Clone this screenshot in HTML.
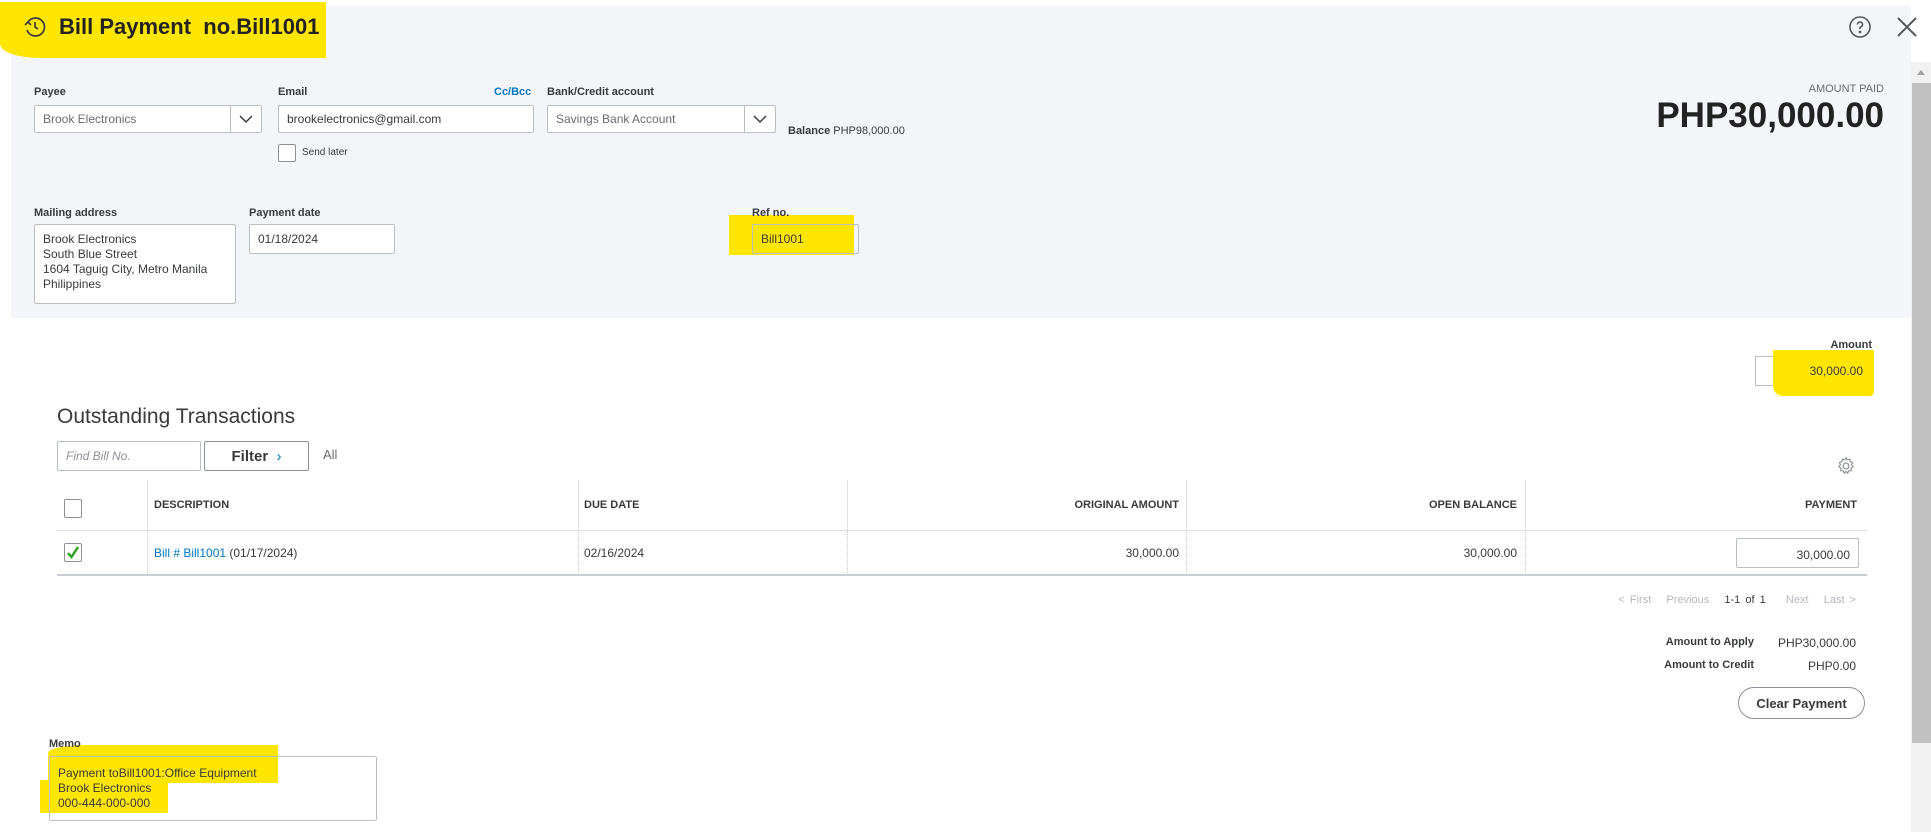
<!DOCTYPE html>
<html><head><meta charset="utf-8"><style>
*{box-sizing:border-box;margin:0;padding:0}
body{width:1931px;height:832px;position:relative;overflow:hidden;background:#fff;font-family:"Liberation Sans",sans-serif;color:#393a3d;font-size:12px}
.a{position:absolute}
.panel{left:11px;top:6px;width:1900px;height:312px;background:#f4f5f8}
.lbl{font-size:11px;font-weight:bold;color:#393a3d}
.inp{background:#fff;border:1px solid #babec5;border-radius:2px;font-size:12px;color:#393a3d;padding-left:8px;display:flex;align-items:center}
.hl{background:#ffe600}
.hd{font-size:11px;font-weight:bold;color:#393a3d}
.vl{width:1px;background:#dcdfe4}
.vd{width:0;border-left:1px dotted #c8ccd2}
</style></head><body>
<div class="a panel"></div>
<div class="a hl" style="left:0;top:2px;width:326px;height:56px;border-radius:0 0 0 40px/0 0 0 14px"></div>
<svg class="a" style="left:23px;top:15px" width="24" height="24" viewBox="0 0 24 24" fill="none" stroke="#393a3d" stroke-width="1.7"><path d="M5 7a9 9 0 1 1-1 8"/><path d="M2 10l3-3 3 3"/><path d="M12 7v5l3 2"/></svg>
<div class="a" style="left:59px;top:14px;font-size:22px;font-weight:bold;color:#222">Bill Payment&nbsp; no.Bill1001</div>
<svg class="a" style="left:1848px;top:15px" width="24" height="24" viewBox="0 0 24 24" fill="none" stroke="#55575c" stroke-width="1.6"><circle cx="12" cy="12" r="10"/><path d="M9.5 9.5a2.5 2.5 0 1 1 3.5 2.3c-.7.3-1 .8-1 1.5V14"/><circle cx="12" cy="17" r=".6" fill="#55575c"/></svg>
<svg class="a" style="left:1895px;top:15px" width="24" height="24" viewBox="0 0 24 24" fill="none" stroke="#55575c" stroke-width="2"><path d="M3 3l18 18M21 3L3 21"/></svg>
<div class="a" style="left:1911px;top:62px;width:20px;height:770px;background:#f1f1f1"></div>
<div class="a" style="left:1912px;top:83px;width:19px;height:660px;background:#c1c1c1"></div>
<div class="a" style="left:1917px;top:70px;width:0;height:0;border-left:4px solid transparent;border-right:4px solid transparent;border-bottom:5px solid #a3a3a3"></div>

<div class="a lbl" style="left:34px;top:86px">Payee</div>
<div class="a inp" style="left:34px;top:105px;width:228px;height:28px;color:#6b6c72">Brook Electronics</div>
<div class="a" style="left:230px;top:105px;width:1px;height:28px;background:#babec5"></div>
<svg class="a" style="left:238px;top:112px" width="16" height="14" viewBox="0 0 16 14" fill="none" stroke="#393a3d" stroke-width="1.5"><path d="M2 4l6 6 6-6"/></svg>
<div class="a lbl" style="left:278px;top:86px">Email</div>
<div class="a" style="left:494px;top:86px;font-size:11px;font-weight:bold;color:#0077c5">Cc/Bcc</div>
<div class="a inp" style="left:278px;top:105px;width:256px;height:28px">brookelectronics@gmail.com</div>
<div class="a lbl" style="left:547px;top:86px">Bank/Credit account</div>
<div class="a inp" style="left:547px;top:105px;width:229px;height:28px;color:#6b6c72">Savings Bank Account</div>
<div class="a" style="left:744px;top:105px;width:1px;height:28px;background:#babec5"></div>
<svg class="a" style="left:752px;top:112px" width="16" height="14" viewBox="0 0 16 14" fill="none" stroke="#393a3d" stroke-width="1.5"><path d="M2 4l6 6 6-6"/></svg>
<div class="a" style="left:788px;top:125px;font-size:11px"><b>Balance</b> PHP98,000.00</div>
<div class="a" style="left:278px;top:144px;width:18px;height:18px;border:1px solid #8d9096;border-radius:2px;background:#fff"></div>
<div class="a" style="left:302px;top:147px;font-size:10px">Send later</div>
<div class="a" style="right:47px;top:83px;font-size:11px;color:#6b6c72">AMOUNT PAID</div>
<div class="a" style="right:47px;top:96px;font-size:35px;font-weight:bold;color:#222">PHP30,000.00</div>

<div class="a lbl" style="left:34px;top:207px">Mailing address</div>
<div class="a" style="left:34px;top:224px;width:202px;height:80px;background:#fff;border:1px solid #babec5;border-radius:2px;padding:7px 8px;font-size:12px;line-height:15px">Brook Electronics<br>South Blue Street<br>1604 Taguig City, Metro Manila<br>Philippines</div>
<div class="a lbl" style="left:249px;top:207px">Payment date</div>
<div class="a inp" style="left:249px;top:224px;width:146px;height:30px">01/18/2024</div>
<div class="a hl" style="left:729px;top:215px;width:125px;height:40px"></div>
<div class="a lbl" style="left:752px;top:207px">Ref no.</div>
<div class="a" style="left:752px;top:224px;width:107px;height:30px;border:1px solid #babec5;border-radius:2px;padding-left:8px;display:flex;align-items:center;font-size:12px">Bill1001</div>

<div class="a lbl" style="right:59px;top:339px">Amount</div>
<div class="a" style="left:1755px;top:356px;width:118px;height:30px;border:1px solid #babec5;background:#fff"></div>
<div class="a hl" style="left:1773px;top:350px;width:101px;height:46px;border-radius:0 0 4px 10px"></div>
<div class="a" style="right:68px;top:364px;font-size:12px">30,000.00</div>

<div class="a" style="left:57px;top:405px;font-size:21px;color:#393a3d">Outstanding Transactions</div>
<div class="a inp" style="left:57px;top:441px;width:144px;height:30px;font-style:italic;color:#8d9096;font-size:12px">Find Bill No.</div>
<div class="a" style="left:204px;top:441px;width:105px;height:30px;border:1px solid #8d9096;border-radius:2px;background:#fff;font-size:15px;font-weight:bold;display:flex;align-items:center;justify-content:center">Filter&nbsp;&nbsp;<span style="color:#0077c5;font-weight:normal">&#8250;</span></div>
<div class="a" style="left:323px;top:447px;font-size:13px;color:#6b6c72">All</div>
<svg class="a" style="left:1836px;top:456px" width="20" height="20" viewBox="0 0 24 24" fill="none" stroke="#8d9096" stroke-width="1.4"><circle cx="12" cy="12" r="3.5"/><path d="M12 2l1.5 2.6 3-.8.5 3 2.9 1-1.2 2.8 1.9 2.4-2.6 1.6.3 3-3 .2L14 20.6l-2-2-2 2-1.3-2.8-3-.2.3-3L3.4 13l1.9-2.4L4.1 7.8l2.9-1 .5-3 3 .8z"/></svg>

<div class="a vl" style="left:147px;top:480px;height:51px"></div>
<div class="a vl" style="left:578px;top:480px;height:51px"></div>
<div class="a vl" style="left:847px;top:480px;height:51px"></div>
<div class="a vl" style="left:1186px;top:480px;height:51px"></div>
<div class="a vl" style="left:1525px;top:480px;height:51px"></div>
<div class="a vd" style="left:147px;top:531px;height:44px"></div>
<div class="a vd" style="left:578px;top:531px;height:44px"></div>
<div class="a vd" style="left:847px;top:531px;height:44px"></div>
<div class="a vd" style="left:1186px;top:531px;height:44px"></div>
<div class="a vd" style="left:1525px;top:531px;height:44px"></div>
<div class="a" style="left:57px;top:530px;width:1810px;height:1px;background:#dcdfe4"></div>
<div class="a" style="left:57px;top:574px;width:1810px;height:2px;background:#c8ccd2"></div>
<div class="a" style="left:64px;top:499px;width:18px;height:19px;border:1px solid #8d9096;border-radius:2px"></div>
<div class="a hd" style="left:154px;top:499px">DESCRIPTION</div>
<div class="a hd" style="left:584px;top:499px">DUE DATE</div>
<div class="a hd" style="right:752px;top:499px">ORIGINAL AMOUNT</div>
<div class="a hd" style="right:414px;top:499px">OPEN BALANCE</div>
<div class="a hd" style="right:74px;top:499px">PAYMENT</div>
<div class="a" style="left:64px;top:543px;width:18px;height:19px;border:1px solid #8d9096;border-radius:2px"></div>
<svg class="a" style="left:65px;top:544px" width="16" height="17" viewBox="0 0 16 17" fill="none" stroke="#2ca01c" stroke-width="2.4"><path d="M3 9l3.5 4L13 3"/></svg>
<div class="a" style="left:154px;top:546px;font-size:12px"><span style="color:#0077c5">Bill # Bill1001</span> (01/17/2024)</div>
<div class="a" style="left:584px;top:546px;font-size:12px">02/16/2024</div>
<div class="a" style="right:752px;top:546px;font-size:12px">30,000.00</div>
<div class="a" style="right:414px;top:546px;font-size:12px">30,000.00</div>
<div class="a" style="left:1736px;top:538px;width:123px;height:30px;border:1px solid #babec5;border-radius:2px;background:#fff;text-align:right;padding:9px 8px 0 0;font-size:12px">30,000.00</div>

<div class="a" style="right:75px;top:594px;font-size:11px;color:#b4b7bc;word-spacing:2px">&lt; First&nbsp;&nbsp; Previous&nbsp;&nbsp; <span style="color:#393a3d">1-1 of 1</span>&nbsp;&nbsp;&nbsp; Next&nbsp;&nbsp; Last &gt;</div>
<div class="a" style="right:177px;top:636px;font-size:11px;font-weight:bold">Amount to Apply</div>
<div class="a" style="right:75px;top:636px;font-size:12px">PHP30,000.00</div>
<div class="a" style="right:177px;top:659px;font-size:11px;font-weight:bold">Amount to Credit</div>
<div class="a" style="right:75px;top:659px;font-size:12px">PHP0.00</div>
<div class="a" style="left:1738px;top:687px;width:127px;height:32px;border:1px solid #8d9096;border-radius:16px;background:#fff;font-size:13px;font-weight:bold;display:flex;align-items:center;justify-content:center">Clear Payment</div>

<div class="a hl" style="left:48px;top:745px;width:230px;height:38px;border-radius:40px 0 0 0/8px 0 0 0"></div>
<div class="a hl" style="left:40px;top:780px;width:128px;height:33px"></div>
<div class="a" style="left:49px;top:756px;width:328px;height:65px;border:1px solid #babec5;border-radius:2px;padding:9px 8px;font-size:12px;line-height:15px">Payment toBill1001:Office Equipment<br>Brook Electronics<br>000-444-000-000</div>
<div class="a lbl" style="left:49px;top:738px">Memo</div>
</body></html>
